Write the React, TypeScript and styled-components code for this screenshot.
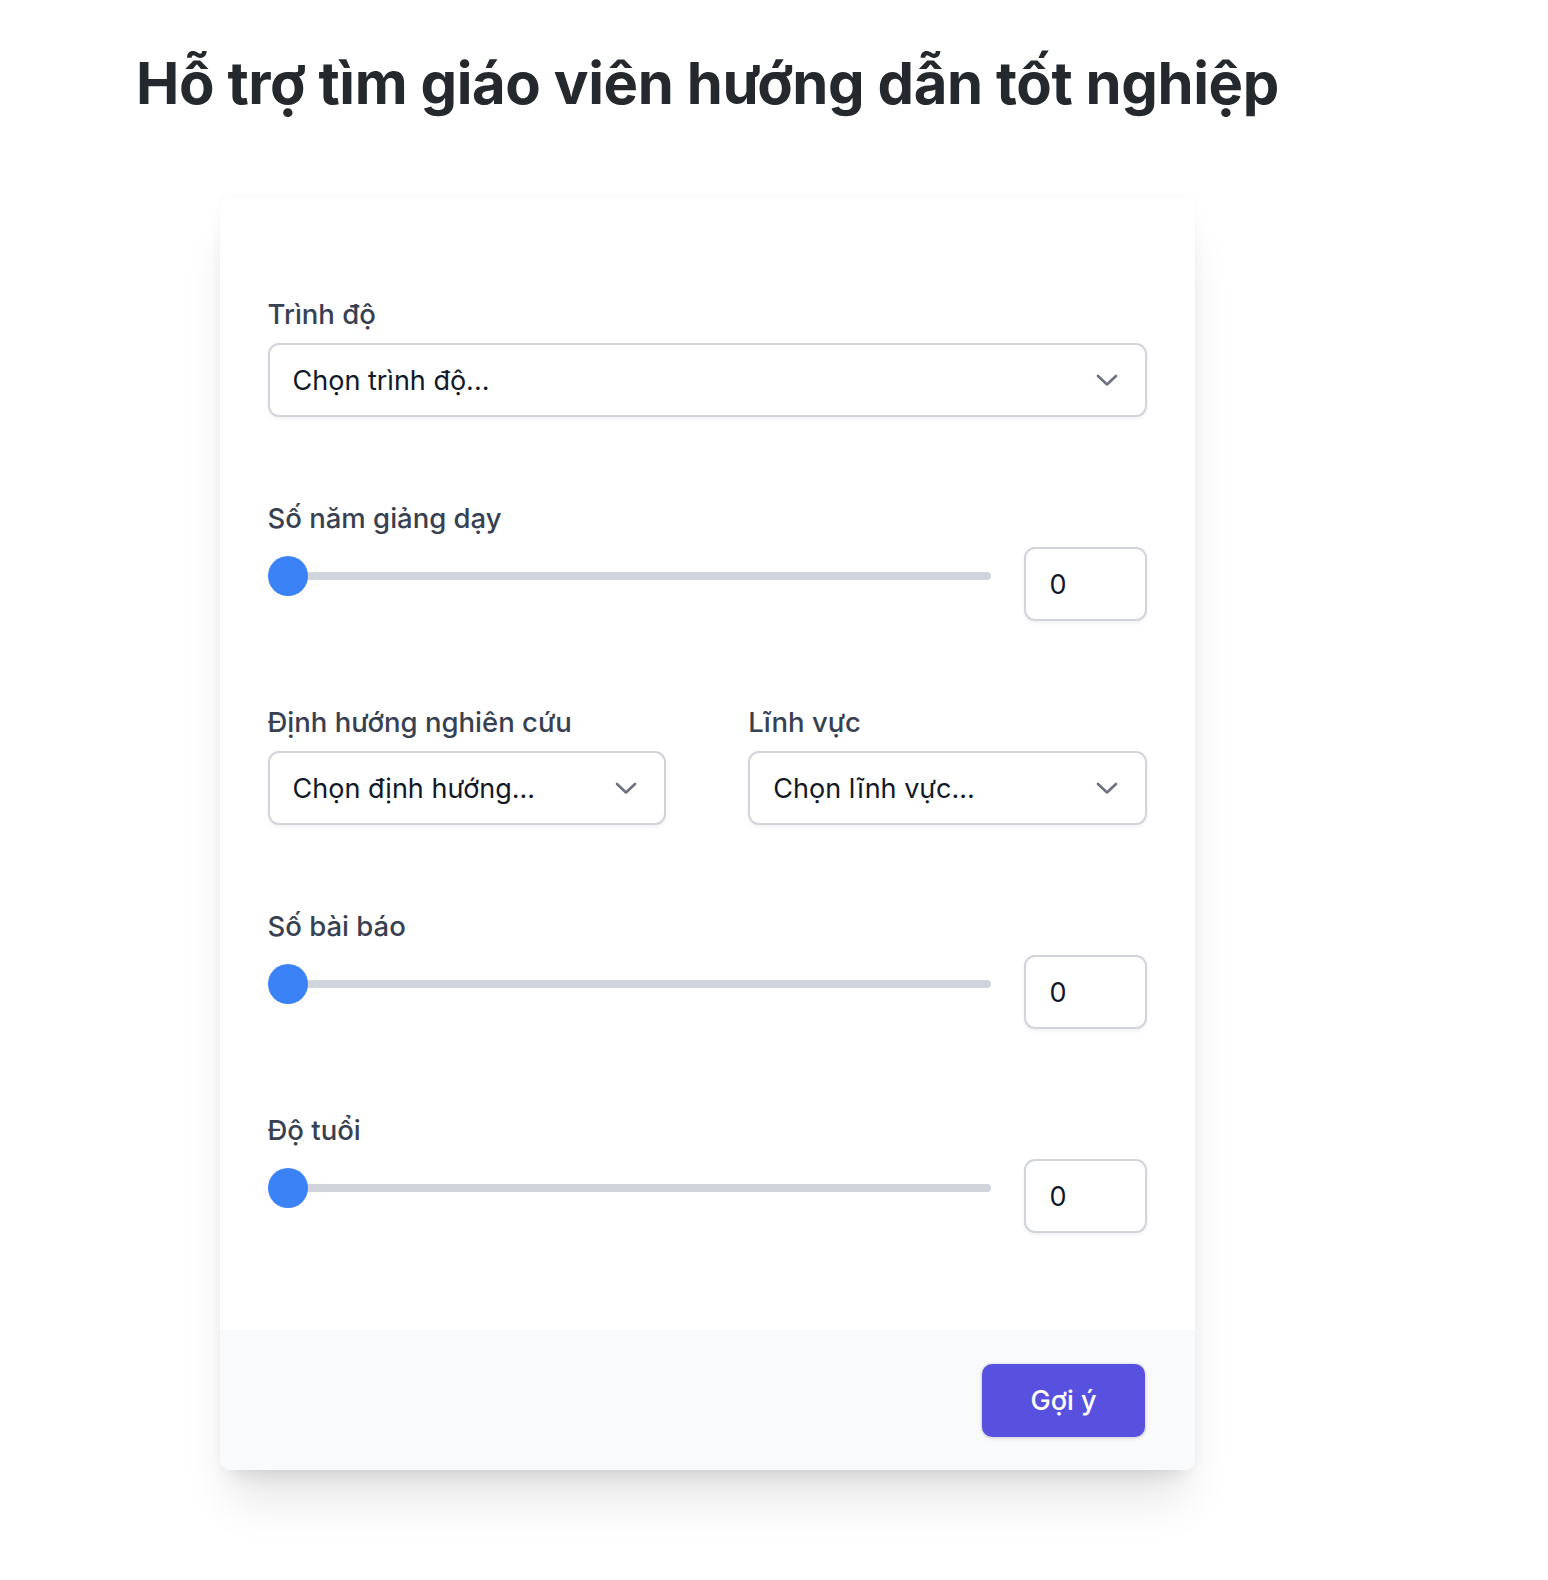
import React, { useState } from "react";
import styled, { createGlobalStyle } from "styled-components";

const GlobalStyle = createGlobalStyle`
  html, body { margin: 0; padding: 0; background: #ffffff; }
  body { font-family: Inter, "Noto Sans", "Liberation Sans", sans-serif; -webkit-font-smoothing: antialiased; }
  * { box-sizing: border-box; }
`;

const Page = styled.div`
  padding: 48px 0 80px 0;
`;

const Title = styled.h1`
  margin: 0 0 0 136px;
  font-size: 58px;
  line-height: 70px;
  font-weight: 700;
  color: #25282d;
  letter-spacing: -0.4px;
`;

const Card = styled.form`
  margin: 80px 0 0 219.5px;
  width: 975.5px;
  background: #ffffff;
  border-radius: 11px;
  overflow: hidden;
  box-shadow: 0 39px 48px -10px rgba(0, 0, 0, 0.1), 0 16px 19px -12px rgba(0, 0, 0, 0.1),
    0 0 14px rgba(0, 0, 0, 0.03);
`;

const Body = styled.div`
  padding: 97px 48px 97px 48px;
  display: flex;
  flex-direction: column;
  gap: 82px;
`;

const Field = styled.div`
  display: flex;
  flex-direction: column;
  gap: 10px;
  min-width: 0;
`;

const Label = styled.label`
  font-size: 27.5px;
  line-height: 38px;
  font-weight: 500;
  color: #374151;
`;

const TwoCols = styled.div`
  display: grid;
  grid-template-columns: 1fr 1fr;
  gap: 82px;
`;

const SelectBox = styled.button`
  display: flex;
  align-items: center;
  justify-content: space-between;
  width: 100%;
  height: 74px;
  padding: 0 27px 0 23px;
  border: 2px solid #d1d5db;
  border-radius: 11px;
  background: #ffffff;
  box-shadow: 0 2px 4px rgba(0, 0, 0, 0.06);
  font-family: inherit;
  font-size: 27px;
  color: #111827;
  text-align: left;
  cursor: pointer;
`;

const Chevron = () => (
  <svg width="22" height="14" viewBox="0 0 22 14" fill="none">
    <path d="M2 3 L11 11.5 L20 3" stroke="#6b7280" strokeWidth="2.6" strokeLinecap="round" strokeLinejoin="round" />
  </svg>
);

const SliderRow = styled.div`
  display: flex;
  align-items: flex-start;
  gap: 33px;
`;

const SliderWrap = styled.div`
  flex: 1;
  height: 58px;
  display: flex;
  align-items: center;
`;

const Range = styled.input`
  -webkit-appearance: none;
  appearance: none;
  width: 100%;
  height: 40px;
  margin: 0;
  background: transparent;
  &::-webkit-slider-runnable-track {
    height: 8px;
    border-radius: 4px;
    background: #d1d5db;
  }
  &::-webkit-slider-thumb {
    -webkit-appearance: none;
    appearance: none;
    width: 40px;
    height: 40px;
    border-radius: 50%;
    background: #3b82f6;
    border: none;
    margin-top: -16px;
  }
`;

const NumberBox = styled.input`
  width: 123.5px;
  height: 74px;
  padding: 0 10px 0 24px;
  border: 2px solid #d1d5db;
  border-radius: 11px;
  background: #ffffff;
  box-shadow: 0 2px 4px rgba(0, 0, 0, 0.06);
  font-family: inherit;
  font-size: 27px;
  color: #111827;
  outline: none;
`;

const Footer = styled.div`
  background: #f9fafb;
  padding: 33.5px 50px 33px 48px;
  display: flex;
  justify-content: flex-end;
`;

const SubmitButton = styled.button`
  width: 163px;
  height: 73px;
  border: none;
  border-radius: 10px;
  background: #5851e0;
  color: #ffffff;
  font-family: inherit;
  font-size: 27px;
  font-weight: 500;
  box-shadow: 0 0 0 1.5px rgba(0, 0, 0, 0.06), 0 2px 4px rgba(0, 0, 0, 0.08);
  cursor: pointer;
`;

type SliderFieldProps = { label: string };

const SliderField = ({ label }: SliderFieldProps) => {
  const [v, setV] = useState(0);
  return (
    <Field>
      <Label>{label}</Label>
      <SliderRow>
        <SliderWrap>
          <Range type="range" min={0} max={50} value={v} onChange={(e) => setV(Number(e.target.value))} />
        </SliderWrap>
        <NumberBox type="text" value={String(v)} onChange={(e) => setV(Number(e.target.value) || 0)} />
      </SliderRow>
    </Field>
  );
};

type SelectFieldProps = { label: string; placeholder: string };

const SelectField = ({ label, placeholder }: SelectFieldProps) => (
  <Field>
    <Label>{label}</Label>
    <SelectBox type="button">
      <span>{placeholder}</span>
      <Chevron />
    </SelectBox>
  </Field>
);

export default function App() {
  return (
    <>
      <GlobalStyle />
      <Page>
        <Title>Hỗ trợ tìm giáo viên hướng dẫn tốt nghiệp</Title>
        <Card onSubmit={(e) => e.preventDefault()}>
          <Body>
            <SelectField label="Trình độ" placeholder="Chọn trình độ..." />
            <SliderField label="Số năm giảng dạy" />
            <TwoCols>
              <SelectField label="Định hướng nghiên cứu" placeholder="Chọn định hướng..." />
              <SelectField label="Lĩnh vực" placeholder="Chọn lĩnh vực..." />
            </TwoCols>
            <SliderField label="Số bài báo" />
            <SliderField label="Độ tuổi" />
          </Body>
          <Footer>
            <SubmitButton type="submit">Gợi ý</SubmitButton>
          </Footer>
        </Card>
      </Page>
    </>
  );
}
